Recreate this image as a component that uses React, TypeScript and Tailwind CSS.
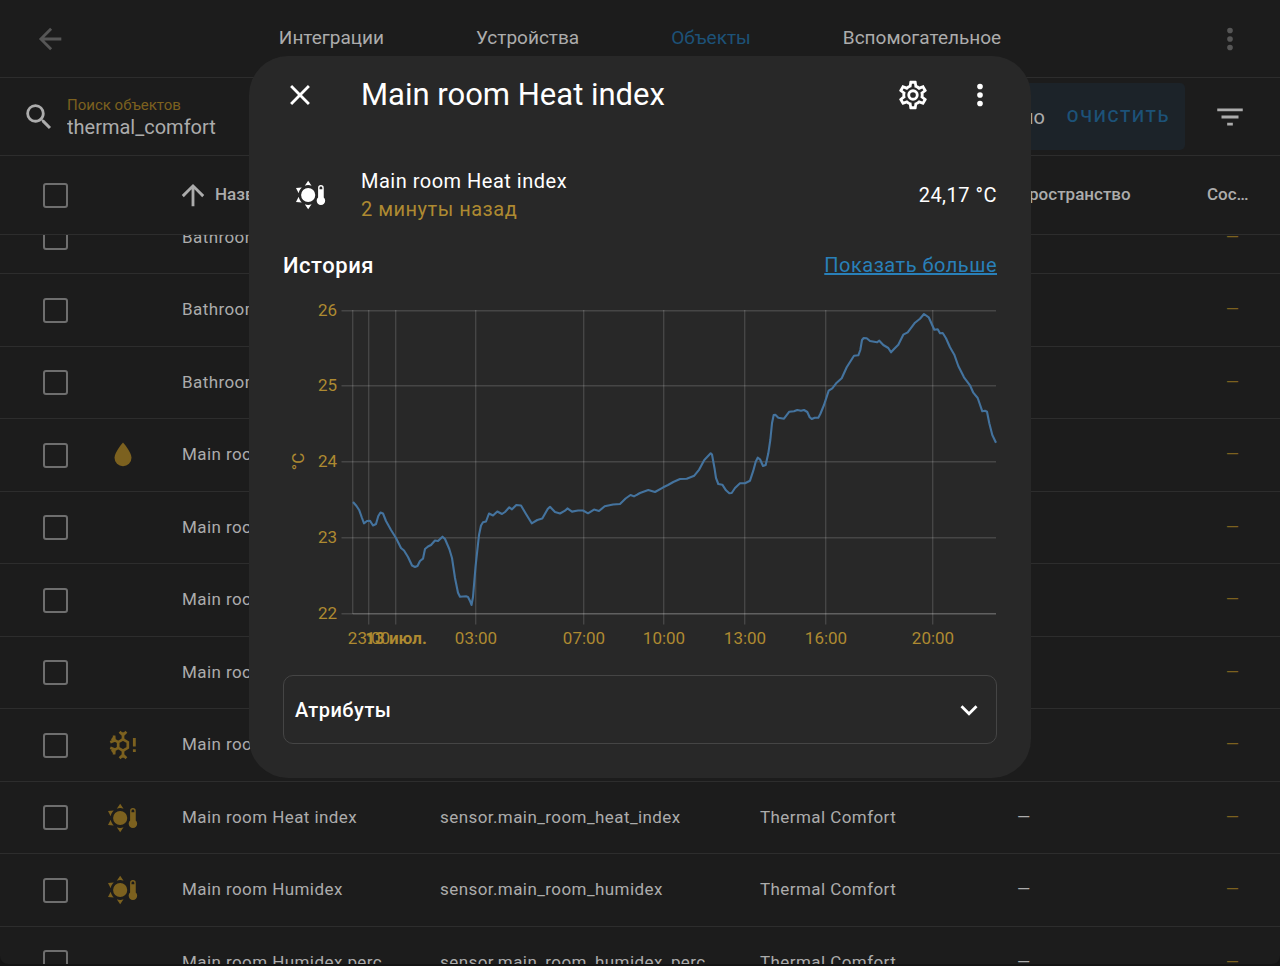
import { clsx } from "clsx"

const ICONS = {
  arrowLeft: "M20,11V13H8L13.5,18.5L12.08,19.92L4.16,12L12.08,4.08L13.5,5.5L8,11H20Z",
  arrowUp: "M13,20H11V8L5.5,13.5L4.08,12.08L12,4.16L19.92,12.08L18.5,13.5L13,8V20Z",
  close:
    "M19,6.41L17.59,5L12,10.59L6.41,5L5,6.41L10.59,12L5,17.59L6.41,19L12,13.41L17.59,19L19,17.59L13.41,12L19,6.41Z",
  dots: "M12,16A2,2 0 0,1 14,18A2,2 0 0,1 12,20A2,2 0 0,1 10,18A2,2 0 0,1 12,16M12,10A2,2 0 0,1 14,12A2,2 0 0,1 12,14A2,2 0 0,1 10,12A2,2 0 0,1 12,10M12,4A2,2 0 0,1 14,6A2,2 0 0,1 12,8A2,2 0 0,1 10,6A2,2 0 0,1 12,4Z",
  magnify:
    "M9.5,3A6.5,6.5 0 0,1 16,9.5C16,11.11 15.41,12.59 14.44,13.73L14.71,14H15.5L20.5,19L19,20.5L14,15.5V14.71L13.73,14.44C12.59,15.41 11.11,16 9.5,16A6.5,6.5 0 0,1 3,9.5A6.5,6.5 0 0,1 9.5,3M9.5,5C7,5 5,7 5,9.5C5,12 7,14 9.5,14C12,14 14,12 14,9.5C14,7 12,5 9.5,5Z",
  filter: "M6,13H18V11H6M3,6V8H21V6M10,18H14V16H10V18Z",
  cog: "M12,8A4,4 0 0,1 16,12A4,4 0 0,1 12,16A4,4 0 0,1 8,12A4,4 0 0,1 12,8M12,10A2,2 0 0,0 10,12A2,2 0 0,0 12,14A2,2 0 0,0 14,12A2,2 0 0,0 12,10M10,22C9.75,22 9.54,21.82 9.5,21.58L9.13,18.93C8.5,18.68 7.96,18.34 7.44,17.94L4.95,18.95C4.73,19.03 4.46,18.95 4.34,18.73L2.34,15.27C2.21,15.05 2.27,14.78 2.46,14.63L4.57,12.97L4.5,12L4.57,11L2.46,9.37C2.27,9.22 2.21,8.95 2.34,8.73L4.34,5.27C4.46,5.05 4.73,4.96 4.95,5.05L7.44,6.05C7.96,5.66 8.5,5.32 9.13,5.07L9.5,2.42C9.54,2.18 9.75,2 10,2H14C14.25,2 14.46,2.18 14.5,2.42L14.87,5.07C15.5,5.32 16.04,5.66 16.56,6.05L19.05,5.05C19.27,4.96 19.54,5.05 19.66,5.27L21.66,8.73C21.79,8.95 21.73,9.22 21.54,9.37L19.43,11L19.5,12L19.43,13L21.54,14.63C21.73,14.78 21.79,15.05 21.66,15.27L19.66,18.73C19.54,18.95 19.27,19.04 19.05,18.95L16.56,17.95C16.04,18.34 15.5,18.68 14.87,18.93L14.5,21.58C14.46,21.82 14.25,22 14,22H10M11.25,4L10.88,6.61C9.68,6.86 8.62,7.5 7.85,8.39L5.44,7.35L4.69,8.65L6.8,10.2C6.4,11.37 6.4,12.64 6.8,13.8L4.68,15.36L5.43,16.66L7.86,15.62C8.63,16.5 9.68,17.14 10.87,17.38L11.24,20H12.76L13.13,17.39C14.32,17.14 15.37,16.5 16.14,15.62L18.57,16.66L19.32,15.36L17.2,13.81C17.6,12.64 17.6,11.37 17.2,10.2L19.31,8.65L18.56,7.35L16.15,8.39C15.38,7.5 14.32,6.86 13.12,6.62L12.75,4H11.25Z",
  chevronDown: "M7.41,8.58L12,13.17L16.59,8.58L18,10L12,16L6,10L7.41,8.58Z",
  water: "M12,20A6,6 0 0,1 6,14C6,10 12,3.25 12,3.25C12,3.25 18,10 18,14A6,6 0 0,1 12,20Z",
  sunThermometer:
    "M10,7A5,5 0 0,1 10,17A5,5 0 0,1 10,7M10,2L12.4,5.4C10.9,4.9 9.1,4.9 7.6,5.4L10,2M10,22L7.6,18.6C9.1,19.1 10.9,19.1 12.4,18.6L10,22M1.4,7L5.5,6.7C4.4,7.8 3.6,9.1 3.3,10.7L1.4,7M1.4,17L3.3,13.3C3.6,14.9 4.4,16.2 5.5,17.3L1.4,17M21,13.8V7A2,2 0 0,0 17,7V13.8A3,3 0 1,0 21,13.8M18,8V7A1,1 0 0,1 20,7V8H18Z",
}

type IconName = keyof typeof ICONS

function Icon({ name, className }: { name: IconName; className?: string }) {
  return (
    <svg viewBox="0 0 24 24" aria-hidden="true" className={clsx("size-[34px] shrink-0 fill-current", className)}>
      <path d={ICONS[name]} fillRule={name === "sunThermometer" ? "evenodd" : undefined} />
    </svg>
  )
}

function SnowflakeAlert() {
  return (
    <svg viewBox="0 0 24 24" aria-hidden="true" className="size-[34px] shrink-0">
      <g fill="none" stroke="currentColor" strokeWidth="1.9">
        <path d="M12,8L15.4,10V14L12,16L8.6,14V10L12,8Z" />
        <path d="M12,8V3M9.6,2.6L12,5L14.4,2.6M12,16V21M9.6,21.4L12,19L14.4,21.4" />
        <path d="M8.6,10L4,7.4M3,10.1L6,8.9L5.7,5.3M8.6,14L4,16.6M3,13.9L6,15.1L5.7,18.7" />
      </g>
      <path fill="currentColor" d="M19,7H21V13H19V7M19,15H21V17H19V15Z" />
    </svg>
  )
}

const TABS = ["Интеграции", "Устройства", "Объекты", "Вспомогательное"]

interface Entity {
  name: string
  id: string
  icon?: IconName | "snowflakeAlert"
}

const ENTITIES: Entity[] = [
  { name: "Bathroom Heat index", id: "sensor.bathroom_heat_index" },
  { name: "Bathroom Humidex", id: "sensor.bathroom_humidex" },
  { name: "Bathroom Thermal perc", id: "sensor.bathroom_thermal_perc" },
  { name: "Main room Absolute", id: "sensor.main_room_absolute", icon: "water" },
  { name: "Main room Dew point", id: "sensor.main_room_dew_point" },
  { name: "Main room Dew perc", id: "sensor.main_room_dew_perc" },
  { name: "Main room Frost point", id: "sensor.main_room_frost_point" },
  { name: "Main room Frost risk", id: "sensor.main_room_frost_risk", icon: "snowflakeAlert" },
  { name: "Main room Heat index", id: "sensor.main_room_heat_index", icon: "sunThermometer" },
  { name: "Main room Humidex", id: "sensor.main_room_humidex", icon: "sunThermometer" },
  { name: "Main room Humidex perc", id: "sensor.main_room_humidex_perc" },
]

const rowGrid = "grid grid-cols-[106px_76px_258fr_320fr_257fr_190fr_73px] items-center border-b border-[#2d2d2d]"
const checkbox = "ml-[43px] block size-[25px] appearance-none rounded-[3px] border-2 border-[#6e6e6e]"

function EntityTable() {
  return (
    <table className="block min-h-0 flex-1 overflow-hidden text-left text-[17px]">
      <thead className="relative z-10 block bg-[#1c1c1c]">
        <tr className={clsx(rowGrid, "h-[79px] font-medium")}>
          <th className="font-medium">
            <input type="checkbox" aria-label="Выбрать все" className={checkbox} />
          </th>
          <th />
          <th className="flex items-center gap-[5px] font-medium">
            <Icon name="arrowUp" className="-ml-[6px]" />
            Название
          </th>
          <th className="font-medium">ID объекта</th>
          <th className="font-medium">Интеграция</th>
          <th className="font-medium">Пространство</th>
          <th className="font-medium">Сос…</th>
        </tr>
      </thead>
      {/* list is scrolled half a row under the header */}
      <tbody className="-mt-[33px] block tracking-wide">
        {ENTITIES.map((entity) => (
          <tr key={entity.id} className={clsx(rowGrid, "h-[72px] whitespace-nowrap even:h-[73px]")}>
            <td>
              <input type="checkbox" aria-label={entity.name} className={checkbox} />
            </td>
            <td className="text-[#7c611f]">
              {entity.icon === "snowflakeAlert" ? <SnowflakeAlert /> : entity.icon && <Icon name={entity.icon} />}
            </td>
            <td>{entity.name}</td>
            <td>{entity.id}</td>
            <td>Thermal Comfort</td>
            <td>—</td>
            <td className="pr-[22px] text-center text-[#7c611f]">—</td>
          </tr>
        ))}
      </tbody>
    </table>
  )
}

const Y_TICKS = [
  { label: "26", y: 310 },
  { label: "25", y: 385 },
  { label: "24", y: 461 },
  { label: "23", y: 537 },
  { label: "22", y: 613 },
]

const X_TICKS = [
  { label: "23:00", x: 369 },
  { label: "13 июл.", x: 396, bold: true },
  { label: "03:00", x: 476 },
  { label: "07:00", x: 584 },
  { label: "10:00", x: 664 },
  { label: "13:00", x: 745 },
  { label: "16:00", x: 826 },
  { label: "20:00", x: 933 },
]

const HISTORY =
  "353,502 356.5,506 359.3,510.3 362,518 364,523.3 367,521 370,520.7 373,525.5 376,524 378.3,516 380.5,512.5 383,513.5 386,521 391,530 396,538 401,548 404,550.5 408,557 412,565.5 415,567 417.5,566 420,561 423,558.7 425,549 428,546.5 431,545 435,540.5 438,541 442.5,536.7 445,539 449.3,549 452,558 455,578 458,592.7 460,596.7 466,596.3 468,597 470,601 471.5,605 473,597 475.6,566 479,535 481,525.5 483,522.3 486,521.5 489,513.5 493,515.5 497.3,511.5 502,514 505,512 509.3,507.3 512,509.3 516.3,505 521,505.5 526,514 531.7,523.3 537.3,520 542.3,518.6 547.7,509 550,506.8 555,512 560,513.5 565,510.7 567.4,508.4 572,511.6 578,510.5 583,510.5 588,513.3 594,509.6 599,511 604.7,506.3 613,504.5 620,504 625.6,498.5 630.5,495 634,496.4 640,493 648.3,490 655,492 663.3,487.3 668,485 673.3,482 680,479 686.7,478.7 694.3,475.7 699.2,469.6 704.3,460 710.7,453.3 712,454.5 714.7,469.3 716,478 718.3,484 722.3,484.7 726,490.3 729.3,493.3 731.7,493 735,488 740,483.3 745,483.3 750,480.7 753.3,470.7 755.7,461.7 757.7,457.7 760,459.3 763,466 765.7,465 768.3,453.3 770.3,440 772,423.3 773.7,415 775.3,414.7 778.3,417.7 784,418.7 789.3,411.7 794,411.3 797.3,410 801,410.7 804,410 807.3,412 809.7,417.3 811.7,419 814.7,417.7 818.3,417.7 820.3,414 824,405 828.7,390.7 832.3,388.3 836.7,382.7 841.7,378.3 846.7,367.3 854,355.7 858.3,355.3 860.3,350 862,340 863.7,338 866.7,338.3 870,341 877,342.3 879.3,340.7 883.3,345 888.3,348 891,352.3 894.3,348.7 898.3,344.7 903.3,334.7 907.7,332.3 915,322.7 920,318.7 924,314 928.7,317.3 934.3,329.7 937.7,329.3 940,333.3 942.7,333 946,338.3 950,347.3 954.3,354.7 958.3,366 964,377.3 970,385.3 973.3,392.7 977.7,398 982.3,411.3 985,410.7 987,411.7 989.3,423.3 992.3,435 996,442.7"

function HistoryChart() {
  return (
    <svg viewBox="283 295 714 360" role="img" aria-label="История" className="mt-[15px] w-full">
      <g stroke="#fff" strokeOpacity="0.14" strokeWidth="1.4">
        {Y_TICKS.map((t) => (
          <line key={t.label} x1="341.5" x2="996" y1={t.y + 0.7} y2={t.y + 0.7} />
        ))}
        <line x1="352.7" x2="352.7" y1="310" y2="614" />
        {X_TICKS.map((t) => (
          <line key={t.x} x1={t.x - 0.3} x2={t.x - 0.3} y1="310" y2="624.5" />
        ))}
        <line x1="353" x2="996" y1="613.7" y2="613.7" />
      </g>
      <polyline points={HISTORY} fill="none" stroke="#44739e" strokeWidth="2.1" strokeLinejoin="round" />
      <g fill="#ae8a31" fontSize="17">
        {Y_TICKS.map((t) => (
          <text key={t.label} x="337" y={t.y + 6} textAnchor="end">
            {t.label}
          </text>
        ))}
        {X_TICKS.map((t) => (
          <text key={t.x} x={t.x} y="644" textAnchor="middle" fontWeight={t.bold ? 700 : 400}>
            {t.label}
          </text>
        ))}
        <text transform="translate(304 461.5) rotate(-90)" textAnchor="middle">
          °C
        </text>
      </g>
    </svg>
  )
}

function MoreInfoDialog() {
  return (
    <div className="fixed inset-0 z-20 flex items-start justify-center pt-14">
      <div
        role="dialog"
        aria-label="Main room Heat index"
        className="w-[782px] max-w-full rounded-[39px] bg-[#282828] px-[34px] pb-[34px] text-white"
      >
        <div className="flex h-[78px] items-center">
          <button aria-label="Закрыть">
            <Icon name="close" />
          </button>
          <h2 className="ml-11 flex-1 text-[31px]">Main room Heat index</h2>
          <button aria-label="Настройки" className="mr-[33px]">
            <Icon name="cog" />
          </button>
          <button aria-label="Меню">
            <Icon name="dots" />
          </button>
        </div>

        <div className="mt-[33px] flex items-center pl-[11px] text-xl tracking-wide">
          <Icon name="sunThermometer" />
          <div className="ml-[33px] flex-1 leading-7">
            <div>Main room Heat index</div>
            <div className="text-[#ae8a31]">2 минуты назад</div>
          </div>
          <div>24,17 °C</div>
        </div>

        <div className="mt-[27px] flex h-[30px] items-center justify-between">
          <h3 className="text-[22px] font-medium tracking-wide">История</h3>
          <a href="#history" className="text-xl tracking-wide text-[#2980b9] underline">
            Показать больше
          </a>
        </div>

        <HistoryChart />

        <button className="mt-5 flex h-[69px] w-full items-center justify-between rounded-[10px] border border-[#454545] pl-[11px] pr-[10px] text-xl font-medium tracking-wide">
          Атрибуты
          <Icon name="chevronDown" />
        </button>
      </div>
    </div>
  )
}

export default function App() {
  return (
    <div className="h-screen bg-[#141414] pb-[2px] font-[Roboto,sans-serif] text-[#acacac]">
      <div className="flex h-full flex-col overflow-hidden rounded-b-lg bg-[#1c1c1c]">
        <header className="flex h-[78px] shrink-0 items-center justify-between border-b border-[#2d2d2d] px-[33px] text-[19px]">
          <button aria-label="Назад" className="text-[#565656]">
            <Icon name="arrowLeft" />
          </button>
          <nav className="flex">
            {TABS.map((tab) => (
              <a key={tab} href="#config" className={clsx("px-[46px]", tab === "Объекты" && "text-[#1c5278]")}>
                {tab}
              </a>
            ))}
          </nav>
          <button aria-label="Меню" className="text-[#565656]">
            <Icon name="dots" />
          </button>
        </header>

        <div className="flex h-[78px] shrink-0 items-center border-b border-[#2d2d2d] pr-[33px] pl-[22px]">
          <Icon name="magnify" />
          <div className="ml-[11px] flex-1">
            <label htmlFor="search" className="block text-[15px] leading-5 text-[#7c611f]">
              Поиск объектов
            </label>
            <input
              id="search"
              type="text"
              defaultValue="thermal_comfort"
              className="block w-full bg-transparent text-xl leading-6 outline-none"
            />
          </div>
          <div className="mr-[28px] flex h-[67px] items-center rounded-[5px] bg-[#1c2329] px-[15px] text-xl">
            9 не показано
            <button className="ml-[22px] text-[17px] font-medium tracking-widest text-[#1c5278]">ОЧИСТИТЬ</button>
          </div>
          <button aria-label="Фильтр">
            <Icon name="filter" />
          </button>
        </div>

        <EntityTable />
      </div>
      <MoreInfoDialog />
    </div>
  )
}
